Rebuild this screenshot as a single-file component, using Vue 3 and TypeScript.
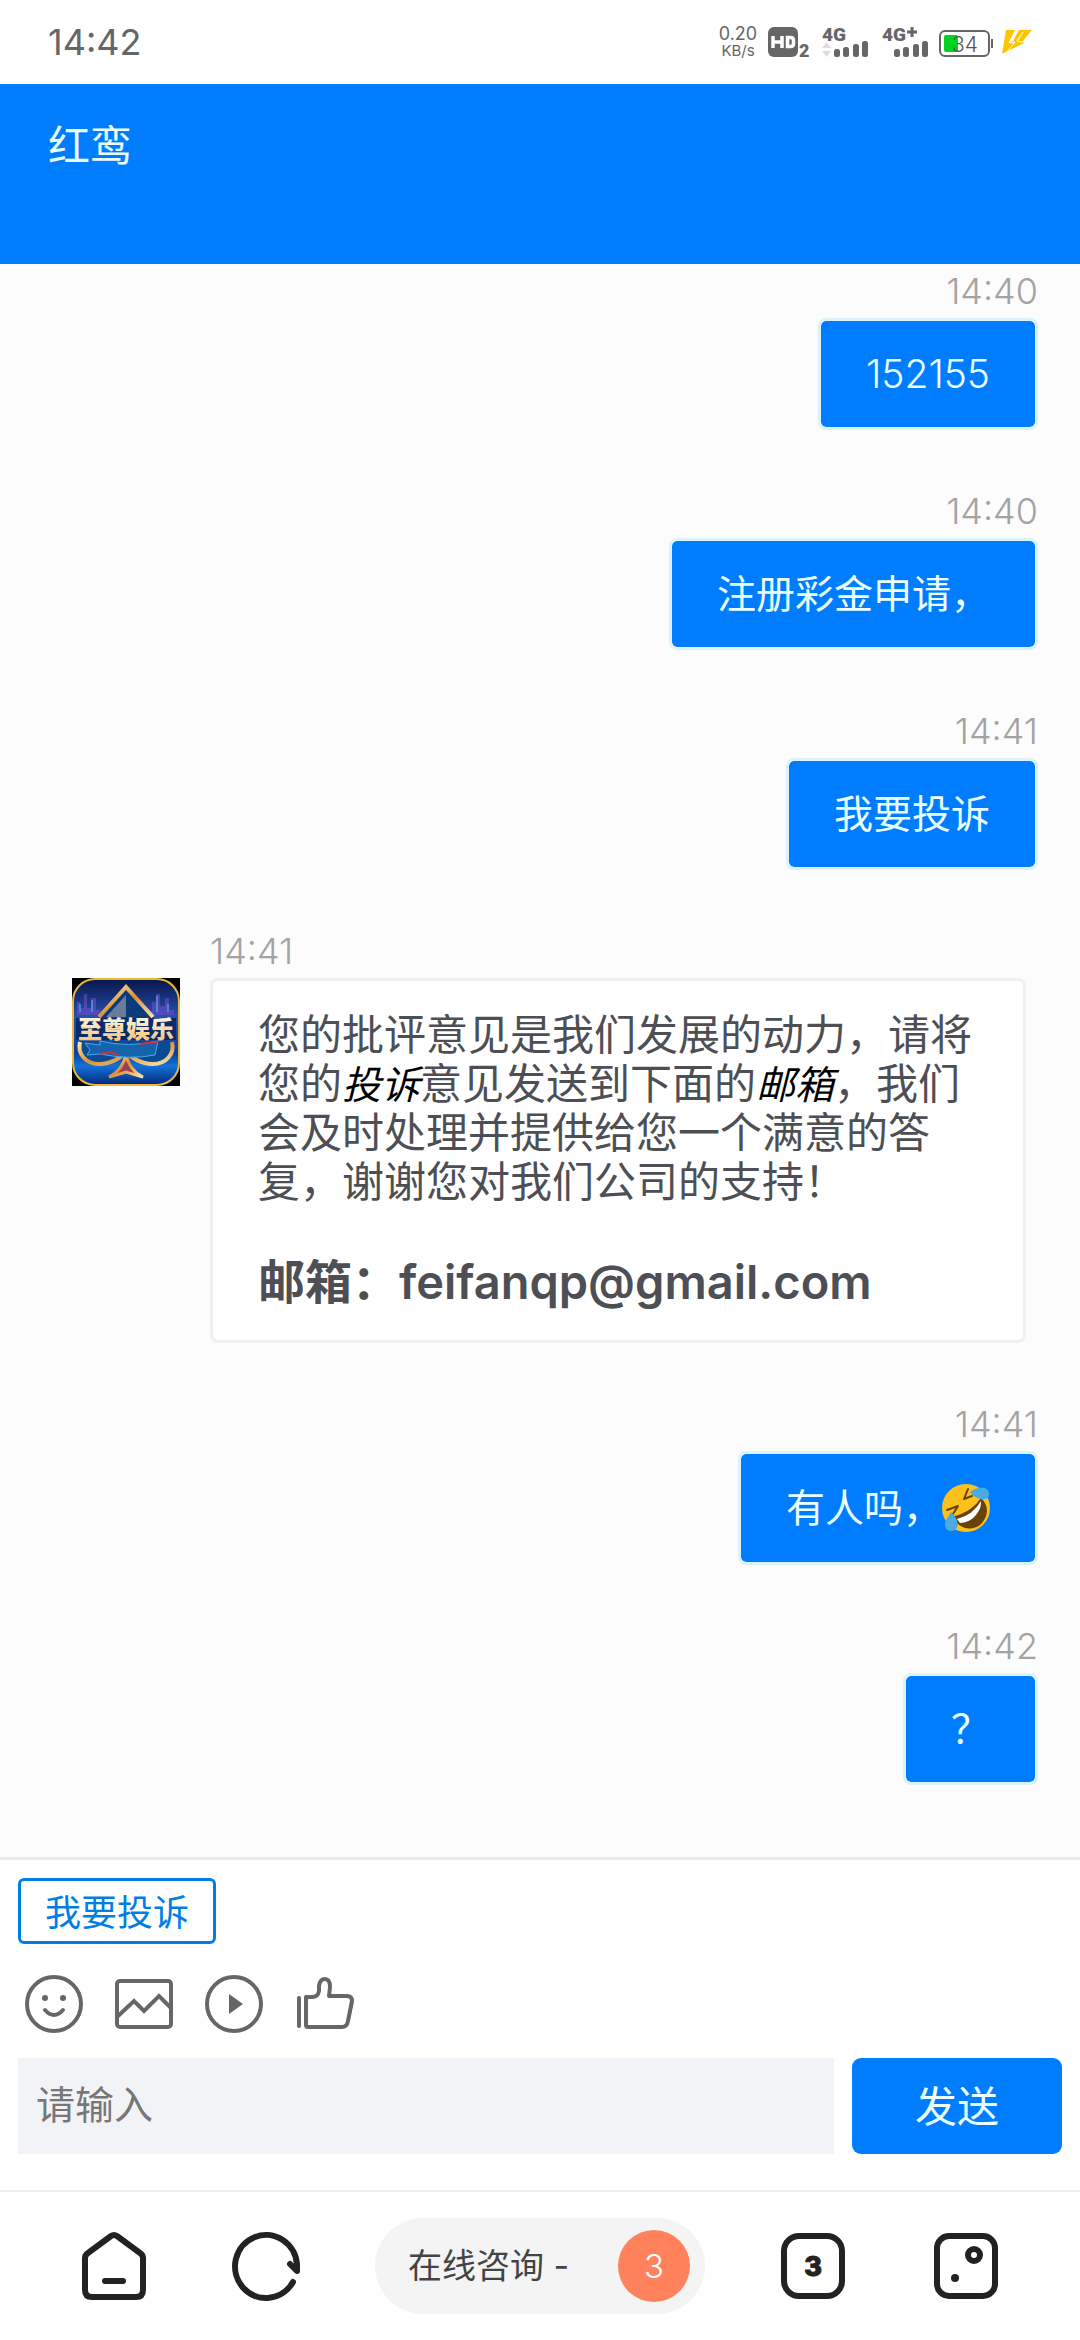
<script setup lang="ts">
import { ref } from 'vue'

interface Message {
  id: number
  time: string
  from: 'me' | 'agent'
  text?: string
  numeric?: boolean
  emoji?: boolean
}

const messages: Message[] = [
  { id: 1, time: '14:40', from: 'me', text: '152155', numeric: true },
  { id: 2, time: '14:40', from: 'me', text: '注册彩金申请，' },
  { id: 3, time: '14:41', from: 'me', text: '我要投诉' },
  { id: 4, time: '14:41', from: 'agent' },
  { id: 5, time: '14:41', from: 'me', text: '有人吗，', emoji: true },
  { id: 6, time: '14:42', from: 'me', text: '？' },
]

const bars = [
  { x: 12, y: 25 },
  { x: 21, y: 23 },
  { x: 31, y: 20 },
  { x: 40, y: 17 },
]

const draft = ref('')
</script>

<template>
  <div class="page">
    <div class="status">
      <span class="clock">14:42</span>
      <div class="indicators">
        <div class="speed">
          <span class="rate">0.20</span>
          <span class="unit">KB/s</span>
        </div>
        <svg width="45" height="36" viewBox="0 0 45 36" aria-hidden="true">
          <rect x="0" y="3" width="30" height="30" rx="6" fill="#666" />
          <path d="M5 12v12M14 12v12M5 18h9M19.500 13.500h3q3 0 3 3v3q0 3-3 3h-3z" fill="none" stroke="#fff" stroke-width="3.500" />
          <text x="31" y="33" class="bold" font-size="18">2</text>
        </svg>
        <svg width="51" height="36" viewBox="0 0 51 36" aria-hidden="true">
          <text x="0" y="17" class="bold" font-size="19">4G</text>
          <path d="M0 24l4.500-6 4.500 6zM0 27h9l-4.500 6z" fill="#ddd" />
          <rect v-for="b in bars" :key="b.x" :x="b.x" :y="b.y" width="6" :height="33 - b.y" rx="2.500" fill="#666" />
        </svg>
        <svg width="48" height="36" viewBox="0 0 48 36" aria-hidden="true">
          <text x="0" y="17" class="bold" font-size="19">4G</text>
          <path d="M30 3v10M25 8h10" stroke="#666" stroke-width="3" />
          <rect v-for="b in bars" :key="b.x" :x="b.x" :y="b.y" width="6" :height="33 - b.y" rx="2.500" fill="#666" />
        </svg>
        <svg width="54" height="36" viewBox="0 0 54 36" aria-hidden="true">
          <rect x="1" y="7" width="49" height="25" rx="5" fill="none" stroke="#666" stroke-width="2" />
          <rect x="5" y="11" width="14" height="17" rx="2" fill="#00d420" />
          <path d="M53 15v9" stroke="#666" stroke-width="2" />
          <text x="13" y="28" font-size="21" font-weight="300" fill="#555">34</text>
        </svg>
        <svg width="30" height="36" viewBox="0 0 30 36" aria-hidden="true">
          <path d="M4 6h9L7 18l4-1L17 6h13L21 17h-3l4 2L0 30z" fill="#ffc400" />
          <path d="M15 6L7 19l6-1L4 29M21 8l-6 9 5 1" fill="none" stroke="#fff" stroke-width="1" />
        </svg>
      </div>
    </div>

    <header class="header">
      <h1>红鸾</h1>
    </header>

    <main class="chat">
      <article v-for="m in messages" :key="m.id" class="message" :class="m.from">
        <svg v-if="m.from === 'agent'" class="avatar" viewBox="0 0 108 108" role="img" aria-label="至尊娱乐">
          <defs>
            <linearGradient id="night" x1="0" y1="0" x2="0" y2="1">
              <stop offset="0" stop-color="#06174a" />
              <stop offset=".35" stop-color="#2a4fae" />
              <stop offset=".7" stop-color="#0a3f9c" />
              <stop offset=".82" stop-color="#1273d8" />
              <stop offset="1" stop-color="#04267a" />
            </linearGradient>
            <linearGradient id="gold" x1="0" y1="0" x2="1" y2="1">
              <stop offset="0" stop-color="#ffe9a0" />
              <stop offset=".5" stop-color="#d9913a" />
              <stop offset="1" stop-color="#f6e2b0" />
            </linearGradient>
            <linearGradient id="letters" x1="0" y1="0" x2="0" y2="1">
              <stop offset="0" stop-color="#fffbe8" />
              <stop offset="1" stop-color="#f3bd6c" />
            </linearGradient>
          </defs>
          <rect width="108" height="108" fill="#000" />
          <rect x="1" y="1" width="106" height="106" rx="22" fill="url(#night)" stroke="#e9b93c" stroke-width="2" />
          <path d="M5 37V24h3v6h4V16h3v14h4V20h5v12h4v5zM80 37V24h4V16h4v12h5V20h4v12h5v5z" fill="#6a4fc4" opacity=".6" />
          <path d="M8 34v-8M20 34V22M85 34V18M96 34V26" stroke="#4bc3ff" stroke-width="1" />
          <path d="M54 10L26 40H82z" fill="#0b3b7d" />
          <path d="M54 17v22H34z" fill="#8f9aa6" opacity=".7" />
          <path d="M27 39L54 9l27 30" fill="none" stroke="url(#gold)" stroke-width="4" />
          <path d="M8 64c-3 12 6 22 19 22 12 0 22-6 27-13 5 7 15 13 27 13 13 0 22-10 19-22" fill="#0b4b93" stroke="url(#gold)" stroke-width="4" />
          <path d="M54 76q-3 16-17 23l17-5 17 5q-14-7-17-23z" fill="#9c4050" stroke="url(#gold)" stroke-width="3" />
          <path d="M13 65l15 2v-4q28 7 58 0l-3 14q-25 5-55-1l-13 1 3-5z" fill="#1363ad" stroke="#49a9e8" stroke-width="1" />
          <path d="M28 76l10-2 8 3M68 66l18-2" stroke="#d52f3a" stroke-width="2" fill="none" />
          <path d="M4 40h100v22H4z" fill="#07265f" opacity=".85" />
          <text x="54" y="60" class="logo" font-size="24" text-anchor="middle" fill="url(#letters)">至尊娱乐</text>
        </svg>
        <div class="body">
          <time>{{ m.time }}</time>
          <div v-if="m.from === 'me'" class="bubble" :class="{ numeric: m.numeric }">
            <span>{{ m.text }}</span>
            <svg v-if="m.emoji" class="emoji" viewBox="0 0 48 48" role="img" aria-label="笑哭">
              <circle cx="24" cy="24" r="24" fill="#fcc21b" />
              <path d="M10 33Q30 28 39 14c9 8 7 20-1 27-8 6-20 5-28-8z" fill="#69420a" />
              <path d="M15 35Q31 31 39 17c1 10-9 22-21 22z" fill="#fff" />
              <path d="M26 5l-4 10 8-3M5 26l11-4-5 8" fill="none" stroke="#69420a" stroke-width="2" stroke-linecap="round" stroke-linejoin="round" />
              <path d="M28 8c6-5 19-7 19 2 0 8-12 7-19-2zM9 28c5 4 10 14 4 18-6 3-11-1-10-7 1-4 4-7 6-11z" fill="#4baae0" />
            </svg>
          </div>
          <div v-else class="bubble">
            <p>您的批评意见是我们发展的动力，请将您的<em>投诉</em>意见发送到下面的<em>邮箱</em>，我们会及时处理并提供给您一个满意的答复，谢谢您对我们公司的支持！</p>
            <h2>邮箱：feifanqp@gmail.com</h2>
          </div>
        </div>
      </article>
    </main>

    <section class="composer">
      <button type="button" class="quick">我要投诉</button>
      <div class="tools">
        <button type="button" aria-label="表情">
          <svg viewBox="0 0 72 72">
            <circle cx="36" cy="36" r="27" />
            <circle cx="27" cy="30" r="3" class="solid" />
            <circle cx="45" cy="30" r="3" class="solid" />
            <path d="M27 42q9 10 18 0" stroke-linecap="round" />
          </svg>
        </button>
        <button type="button" aria-label="图片">
          <svg viewBox="0 0 72 72">
            <rect x="9" y="13" width="54" height="46" rx="3" />
            <path d="M9 49l17-16 10 10 15-15 12 12" />
          </svg>
        </button>
        <button type="button" aria-label="视频">
          <svg viewBox="0 0 72 72">
            <circle cx="36" cy="36" r="27" />
            <path d="M31 26l14 10-14 10z" class="solid" />
          </svg>
        </button>
        <button type="button" aria-label="评价">
          <svg viewBox="0 0 72 72">
            <path d="M11 30v28" stroke-linecap="round" />
            <path d="M18 57V29h6q6 0 7-6v-5q1-7 6-7 5 0 5 8l-1 9h18q5 0 5 5l-4 20q-1 6-6 6H20q-2 0-2-2z" stroke-linejoin="round" />
          </svg>
        </button>
      </div>
      <form class="entry" @submit.prevent>
        <input v-model="draft" type="text" placeholder="请输入" aria-label="请输入" />
        <button type="submit">发送</button>
      </form>
    </section>

    <nav class="browser">
      <button type="button" aria-label="主页">
        <svg viewBox="0 0 72 72">
          <path d="M7 28q0-3 3-5L33 6q3-2 6 0l23 17q3 2 3 5v32q0 7-7 7H14q-7 0-7-7z" />
          <path d="M27 51h18" stroke-linecap="round" />
        </svg>
      </button>
      <button type="button" aria-label="刷新">
        <svg viewBox="0 0 72 72">
          <path d="M62 52A31 31.500 0 1 1 66 35v6l-7-7" stroke-linecap="round" stroke-linejoin="round" />
        </svg>
      </button>
      <a class="pill" href="#">
        <span>在线咨询 -</span>
        <span class="badge">3</span>
      </a>
      <button type="button" aria-label="标签页">
        <svg viewBox="0 0 72 72">
          <rect x="7" y="6" width="58" height="60" rx="15" />
          <text x="36" y="46" class="tabs" text-anchor="middle">3</text>
        </svg>
      </button>
      <button type="button" aria-label="菜单">
        <svg viewBox="0 0 72 72">
          <rect x="7" y="6" width="58" height="60" rx="12" />
          <circle cx="44" cy="25" r="6" />
          <circle cx="25" cy="48" r="4" class="dot" />
        </svg>
      </button>
    </nav>
  </div>
</template>

<style>
body {
  margin: 0;
  background: #fff;
}
</style>

<style scoped>
.page {
  display: flex;
  flex-direction: column;
  min-height: 100vh;
  font-family: Inter, 'Noto Sans CJK SC', sans-serif;
  background: #fff;
}

button,
input {
  margin: 0;
  padding: 0;
  border: 0;
  background: none;
  font-family: inherit;
}

svg {
  display: block;
}

.status {
  display: flex;
  align-items: center;
  justify-content: space-between;
  height: 84px;
  padding: 0 48px;
  color: #666;
}

.clock {
  font-size: 36px;
}

.indicators {
  display: flex;
  align-items: center;
  gap: 9px;
}

.speed {
  display: flex;
  flex-direction: column;
  align-items: center;
  width: 42px;
}

.rate {
  font-size: 18px;
  line-height: 18px;
}

.unit {
  font-size: 15px;
  line-height: 16px;
}

.bold {
  font-family: Roboto, sans-serif;
  font-weight: 900;
  fill: #666;
}

.header {
  height: 180px;
  padding: 37px 48px;
  box-sizing: border-box;
  background: #007dff;
}

h1 {
  margin: 0;
  font-size: 42px;
  line-height: 50px;
  font-weight: 400;
  color: #eaffff;
}

.chat {
  flex: 1;
  display: flex;
  flex-direction: column;
  gap: 54px;
  padding: 0 42px 72px 72px;
  background: #fcfcfc;
}

.message {
  display: flex;
  align-items: flex-start;
}

.me {
  justify-content: flex-end;
}

.agent {
  gap: 30px;
  padding-right: 12px;
}

.avatar {
  flex: none;
  width: 108px;
  height: 108px;
  margin-top: 54px;
}

.logo {
  font-weight: 900;
}

.body {
  display: flex;
  flex-direction: column;
  align-items: flex-start;
}

.agent .body {
  flex: 1;
}

.me .body {
  align-items: flex-end;
}

time {
  font-size: 36px;
  line-height: 54px;
  font-weight: 300;
  color: #a3a3a3;
}

.bubble {
  border-radius: 8px;
  font-size: 39px;
}

.me .bubble {
  display: flex;
  align-items: center;
  padding: 30px 45px;
  border: 3px solid #daf3fc;
  background: #007dff;
  background-clip: padding-box;
  line-height: 46px;
  color: #eaffff;
}

.numeric {
  font-weight: 300;
}

.emoji {
  width: 48px;
  height: 48px;
}

.agent .bubble {
  box-sizing: border-box;
  width: 100%;
  padding: 29px 45px 30px;
  border: 3px solid #f0f0f0;
  background: #fff;
  color: #4d4f54;
}

p {
  margin: 0 0 48px;
  font-size: 42px;
  line-height: 49px;
}

em {
  font-size: 39px;
  line-height: 39px;
  color: #000;
}

h2 {
  margin: 0;
  font-size: 47px;
  line-height: 56px;
  font-weight: 600;
}

.composer {
  display: flex;
  flex-direction: column;
  align-items: flex-start;
  padding: 18px 18px 36px;
  border-top: 3px solid #e9e9e9;
}

.quick {
  height: 66px;
  padding: 0 24px 3px;
  border: 3px solid #007ee5;
  border-radius: 6px;
  font-size: 36px;
  color: #007ee5;
}

.tools {
  display: flex;
  gap: 18px;
  margin: 24px 0 18px;
}

.tools svg {
  width: 72px;
  height: 72px;
  fill: none;
  stroke: #666;
  stroke-width: 4px;
}

.tools .solid {
  fill: #666;
  stroke: none;
}

.entry {
  display: flex;
  gap: 18px;
  width: 100%;
}

.entry input {
  box-sizing: border-box;
  flex: 1;
  min-width: 0;
  height: 96px;
  padding: 0 18px 3px;
  border-radius: 0;
  background: #f2f3f7;
  font-size: 39px;
  color: #333;
}

.entry input::placeholder {
  color: #777;
}

.entry button {
  width: 210px;
  padding-bottom: 6px;
  border-radius: 9px;
  background: #007dff;
  font-size: 42px;
  color: #eaffff;
}

.browser {
  display: grid;
  grid-template-columns: 1fr 1fr auto 1fr 1fr;
  align-items: center;
  justify-items: center;
  height: 148px;
  padding: 0 38px;
  border-top: 2px solid #ededed;
}

.browser svg {
  width: 72px;
  height: 72px;
  fill: none;
  stroke: #222;
  stroke-width: 6px;
}

.browser .dot {
  fill: #222;
  stroke: none;
}

.browser .tabs {
  font-size: 27px;
  font-weight: 800;
  fill: #222;
  stroke-width: 1px;
}

.pill {
  display: flex;
  align-items: center;
  justify-content: space-between;
  box-sizing: border-box;
  width: 330px;
  height: 96px;
  margin: 0 32px;
  padding: 0 15px 0 33px;
  border-radius: 48px;
  background: #f4f4f4;
  font-size: 34px;
  line-height: 72px;
  color: #444;
  text-decoration: none;
}

.badge {
  width: 72px;
  height: 72px;
  border-radius: 50%;
  background: #ff825c;
  font-size: 33px;
  font-weight: 300;
  text-align: center;
  color: #fff;
}
</style>
